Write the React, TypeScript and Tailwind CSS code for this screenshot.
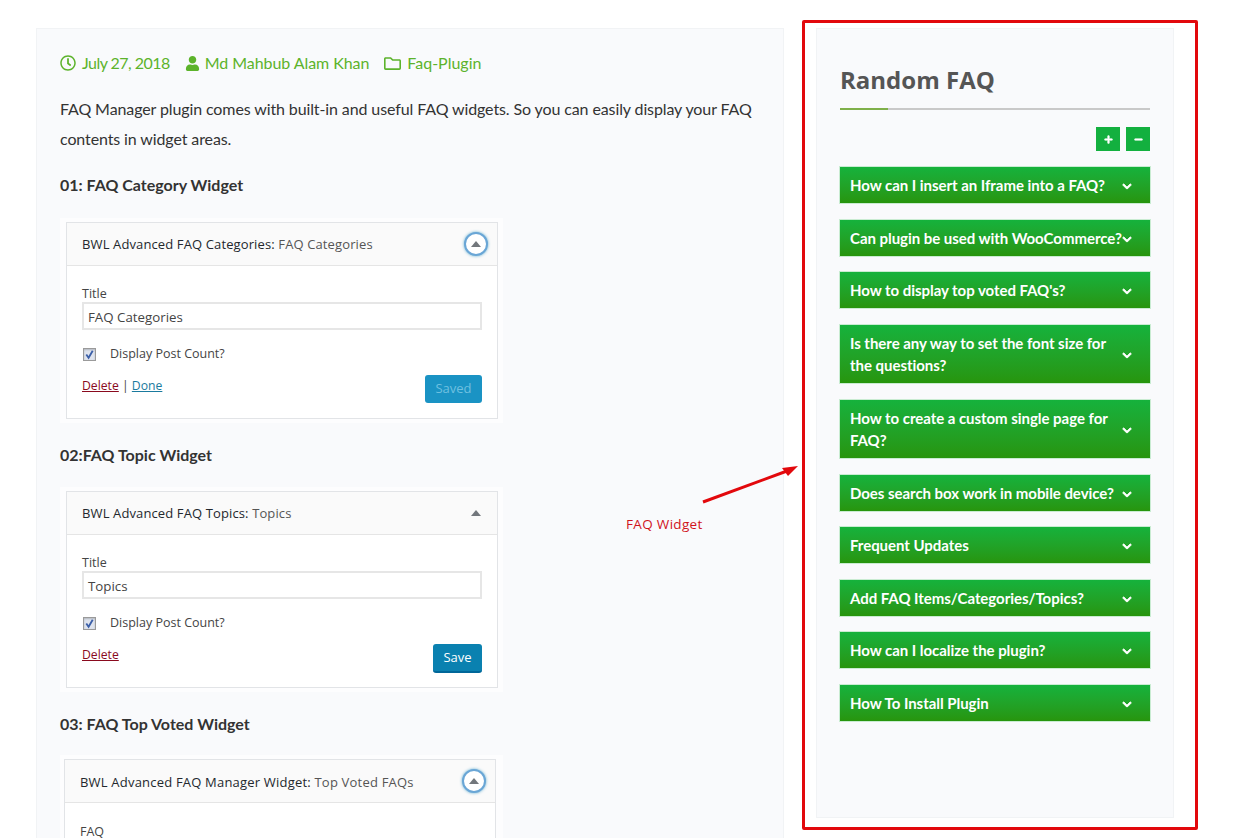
import { FaRegClock, FaUser, FaRegFolder, FaChevronDown, FaPlus, FaMinus } from "react-icons/fa";

const wpFont = "font-['Open_Sans','Noto_Sans',sans-serif]";

function CircleToggle() {
  return (
    <span className="flex h-[24px] w-[24px] items-center justify-center rounded-full border-2 border-[#6aa6d6] bg-white shadow-[0_0_3px_rgba(30,140,190,0.7)]">
      <span className="h-0 w-0 border-x-[5px] border-b-[6px] border-x-transparent border-b-[#72777c]" />
    </span>
  );
}

function PlainToggle() {
  return (
    <span className="flex h-[24px] w-[24px] items-center justify-center">
      <span className="h-0 w-0 border-x-[5px] border-b-[6px] border-x-transparent border-b-[#72777c]" />
    </span>
  );
}

function Checkbox() {
  return (
    <span className="ml-[1px] flex h-[13px] w-[13px] items-center justify-center border border-[#9a9a9a] bg-[#dfe4ee] shadow-[inset_0_1px_2px_rgba(0,0,0,0.2)]">
      <svg viewBox="0 0 12 12" className="h-[11px] w-[11px]">
        <path d="M2.5 6 L5 9.5 L9.5 2" fill="none" stroke="#3b5fa8" strokeWidth="2" />
      </svg>
    </span>
  );
}

function Header({ name, sub, toggle, wide }: { name: string; sub: string; toggle: React.ReactNode; wide?: boolean }) {
  return (
    <div className="flex h-[43px] items-center justify-between border-b border-[#e5e5e5] bg-[#fafafa] pl-[15px] pr-[9px] text-[13px]">
      <span className={wide ? "mt-[4px] tracking-[0.2px] text-[#23282d]" : "mt-[2px] tracking-[0.12px] text-[#23282d]"}>
        {name} <span className="text-[#555]">{sub}</span>
      </span>
      {toggle}
    </div>
  );
}

function Widget({
  name,
  sub,
  value,
  toggle,
  done,
  saved,
}: {
  name: string;
  sub: string;
  value: string;
  toggle: React.ReactNode;
  done?: boolean;
  saved?: boolean;
}) {
  return (
    <div className="w-[443px] bg-[#fdfdfe] py-[4px] pl-[6px] pr-[5px]">
      <div className={`border border-[#e2e4e7] bg-white text-[12.5px] text-[#444] ${wpFont}`}>
        <Header name={name} sub={sub} toggle={toggle} />
        <div className="h-[152px] px-[15px] pt-[20px]">
          <div className="leading-[16px]">Title</div>
          <div className="flex h-[28px] items-center border-2 border-[#e6e6e6] pl-[4px] pt-[4px] text-[13.3px] text-[#444]">{value}</div>
          <div className="mt-[17px] flex items-center gap-[14px] leading-[14px]">
            <Checkbox />
            <span>Display Post Count?</span>
          </div>
          <div className="mt-[14px] flex items-start justify-between">
            <span className="mt-[3px] text-[12.2px] leading-[16px]">
              <span className="text-[#8a0a1e] underline">Delete</span>
              {done && (
                <>
                  {" "}
                  | <span className="text-[#1a7a9e] underline">Done</span>
                </>
              )}
            </span>
            {saved ? (
              <span className="flex h-[28px] w-[57px] items-center justify-center rounded-[3px] bg-[#1a93c4] text-[13px] text-[#6fc0e0]">
                Saved
              </span>
            ) : (
              <span className="flex h-[29px] w-[49px] items-center justify-center rounded-[3px] border-b-2 border-[#006799] bg-[#0a81b0] text-[13px] text-white">
                Save
              </span>
            )}
          </div>
        </div>
      </div>
    </div>
  );
}

const faqs: [string, boolean?][] = [
  ["How can I insert an Iframe into a FAQ?"],
  ["Can plugin be used with WooCommerce?"],
  ["How to display top voted FAQ's?"],
  ["Is there any way to set the font size for the questions?", true],
  ["How to create a custom single page for FAQ?", true],
  ["Does search box work in mobile device?"],
  ["Frequent Updates"],
  ["Add FAQ Items/Categories/Topics?"],
  ["How can I localize the plugin?"],
  ["How To Install Plugin"],
];

export default function App() {
  return (
    <div className="relative h-[838px] w-[1235px] overflow-hidden bg-white font-['Lato',sans-serif]">
      <div className="flex items-start gap-[32px] pl-[36px] pt-[28px]">
        <main className="h-[812px] w-[748px] border border-[#f1f3f5] bg-[#f9fafc] px-[23px] pt-[22px]">
          <div className="flex items-center text-[16px] leading-[24px] text-[#5cb32b]">
            <FaRegClock className="mr-[6px] h-[16px] w-[16px]" />
            <span className="tracking-[-0.53px]">July 27, 2018</span>
            <FaUser className="ml-[15px] mr-[5px] h-[15px] w-[15px]" />
            <span className="tracking-[-0.06px]">Md Mahbub Alam Khan</span>
            <FaRegFolder className="ml-[15px] mr-[6px] h-[17px] w-[17px]" />
            <span>Faq-Plugin</span>
          </div>
          <p className="mt-[19px] text-[16px] leading-[30px] tracking-[-0.11px] text-[#333]">
            FAQ Manager plugin comes with built-in and useful FAQ widgets. So you can easily display your FAQ contents in widget areas.
          </p>
          <h3 className="mt-[19px] text-[16px] font-bold leading-[24px] text-[#333]">01: FAQ Category Widget</h3>
          <div className="mt-[21px]">
            <Widget name="BWL Advanced FAQ Categories:" sub="FAQ Categories" value="FAQ Categories" toggle={<CircleToggle />} done saved />
          </div>
          <h3 className="mt-[20px] text-[16px] font-bold leading-[24px] text-[#333]">02:FAQ Topic Widget</h3>
          <div className="mt-[20px]">
            <Widget name="BWL Advanced FAQ Topics:" sub="Topics" value="Topics" toggle={<PlainToggle />} />
          </div>
          <h3 className="mt-[20px] text-[16px] font-bold leading-[24px] text-[#333]">03: FAQ Top Voted Widget</h3>
          <div className="mt-[19px] h-[100px] w-[443px] bg-[#fdfdfe] pl-[4px] pr-[7px] pt-[4px]">
            <div className={`h-[96px] border border-[#e2e4e7] bg-white text-[#444] ${wpFont}`}>
              <Header name="BWL Advanced FAQ Manager Widget:" sub="Top Voted FAQs" toggle={<CircleToggle />} wide />
              <div className="px-[15px] pt-[22px] text-[12.5px] leading-[14px]">FAQ</div>
            </div>
          </div>
        </main>

        <aside className="h-[790px] w-[358px] border border-[#f1f3f5] bg-[#f9fafc] px-[23px] pt-[35px]">
          <h2 className="text-[24px] font-bold leading-[32px] text-[#555] font-['Open_Sans',sans-serif]">Random FAQ</h2>
          <div className="mt-[12px] h-[2px] bg-[#c9c9c9]">
            <div className="h-[2px] w-[48px] bg-[#7fb04a]" />
          </div>
          <div className="mt-[17px] flex justify-end gap-[6px]">
            <span className="flex h-[24px] w-[24px] items-center justify-center bg-[#13b03f] text-white">
              <FaPlus className="h-[9px] w-[9px] stroke-white stroke-[30]" />
            </span>
            <span className="flex h-[24px] w-[24px] items-center justify-center bg-[#13b03f] text-white">
              <FaMinus className="h-[9px] w-[9px] stroke-white stroke-[30]" />
            </span>
          </div>
          <div className="-ml-[1px] mt-[15px] flex flex-col gap-[14.5px]">
            {faqs.map(([q, two]) => (
              <div
                key={q}
                className={`flex w-[312px] items-center justify-between border border-[#c9ecd2] bg-gradient-to-b from-[#15b23c] to-[#27950c] pl-[10px] pr-[18px] text-[15px] font-bold leading-[22px] tracking-[-0.04px] text-white ${two ? "h-[60.5px]" : "h-[38px]"}`}
              >
                <span className={two ? "w-[270px]" : "whitespace-nowrap"}>{q}</span>
                <FaChevronDown className="h-[10px] w-[10px] shrink-0 translate-y-[1.5px] stroke-white stroke-[40]" />
              </div>
            ))}
          </div>
        </aside>
      </div>

      <div className="pointer-events-none absolute left-[802px] top-[20px] h-[810px] w-[396px] rounded-[2px] border-[3px] border-[#e2080c]" />
      <svg className="pointer-events-none absolute left-[695px] top-[460px]" width="105" height="48" viewBox="0 0 105 48">
        <path d="M8 42 L92 11" stroke="#e2080c" strokeWidth="3" fill="none" />
        <path d="M103 6 L87 8 L93 16 Z" fill="#e2080c" />
      </svg>
      <span className={`absolute left-[626px] top-[515px] text-[13.5px] leading-[18px] tracking-[0.33px] text-[#d0141c] ${wpFont}`}>FAQ Widget</span>
    </div>
  );
}
